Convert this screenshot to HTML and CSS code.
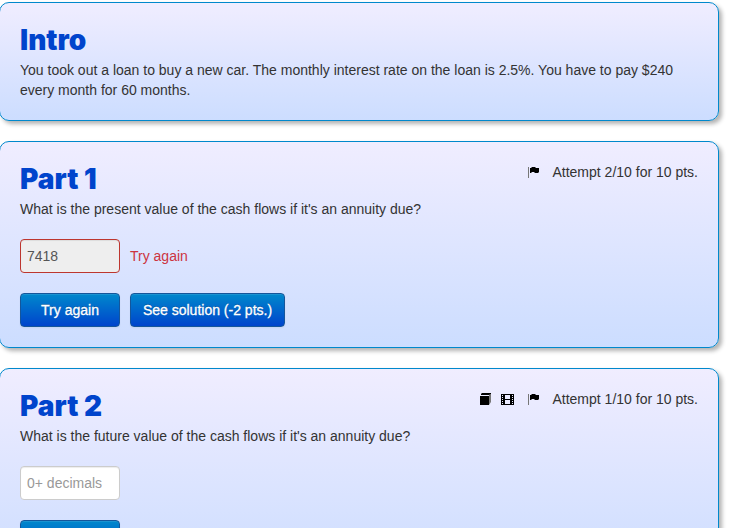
FILE: index.html
```
<!DOCTYPE html>
<html lang="en">

<head>
    <meta charset="UTF-8">
    <meta name="viewport" content="width=device-width, initial-scale=1.0">
    <title>Annuity problem</title>
    <link rel="stylesheet" href="styles.css">
</head>

<body>
    <div class="box">
        <h2>Intro</h2>
        <p><span class="line line-one">You took out a loan to buy a new car. The monthly interest rate on the loan is 2.5%. You have to pay $240</span> <span class="line line-two">every month for 60 months.</span></p>
    </div>

    <div class="box">
        <div class="box-head">
            <h2>Part 1</h2>
            <div class="status">
                <svg class="icon" width="14" height="14" viewBox="0 0 14 14">
                    <path fill="#777" d="M1 2h1v11H1z" />
                    <path d="M3 3h1l1-1h3l1 1h3v4l-1 1H8L7 7H5L4 8H3z" />
                </svg>
                <span class="attempt">Attempt 2/10 for 10 pts.</span>
            </div>
        </div>
        <p class="question-one">What is the present value of the cash flows if it's an annuity due?</p>
        <div class="answer">
            <input class="wrong" type="text" value="7418" readonly>
            <span class="feedback">Try again</span>
        </div>
        <div class="buttons">
            <button type="button" class="submit">Try again</button>
            <button type="button" class="solution">See solution (-2 pts.)</button>
        </div>
    </div>

    <div class="box">
        <div class="box-head">
            <h2>Part 2</h2>
            <div class="status">
                <svg class="icon book" width="14" height="14" viewBox="0 0 14 14">
                    <path fill="#777" d="M10 3l2-1v8l-2 3z" />
                    <path d="M1 4h9v9H1z M2 2l1-1h9v1l-2 1H2z" />
                </svg>
                <svg class="icon film" width="14" height="14" viewBox="0 0 14 14">
                    <path fill-rule="evenodd" d="M0 2h13v11H0z M4 3v4h5V3z M4 8v4h5V8z M1 3v1h1V3z M1 5v1h1V5z M1 7v1h1V7z M1 9v1h1V9z M1 11v1h1v-1z M11 3v1h1V3z M11 5v1h1V5z M11 7v1h1V7z M11 9v1h1V9z M11 11v1h1v-1z" />
                </svg>
                <svg class="icon" width="14" height="14" viewBox="0 0 14 14">
                    <path fill="#777" d="M1 2h1v11H1z" />
                    <path d="M3 3h1l1-1h3l1 1h3v4l-1 1H8L7 7H5L4 8H3z" />
                </svg>
                <span class="attempt">Attempt 1/10 for 10 pts.</span>
            </div>
        </div>
        <p class="question-two">What is the future value of the cash flows if it's an annuity due?</p>
        <div class="answer">
            <input type="text" placeholder="0+ decimals">
        </div>
        <div class="buttons">
            <button type="button" class="submit">Submit</button>
        </div>
    </div>
</body>

</html>
```

FILE: styles.css
```
* {
    box-sizing: border-box;
}

html {
    height: 100%;
    overflow: hidden;
}

body {
    height: 100%;
    overflow: hidden;
    margin: 0;
    padding-top: 2px;
    background-color: #ffffff;
    color: #333333;
    font-family: "Helvetica Neue", "Liberation Sans", Arial, sans-serif;
    font-size: 14px;
    line-height: 20px;
}

.box {
    width: 720px;
    margin: 0 0 20px -1px;
    padding: 17px 20px 20px;
    border: 1px solid #0088cc;
    border-radius: 10px;
    background-image: linear-gradient(#f0edff, #ccddff);
    box-shadow: 3px 3px 4px rgba(0, 0, 0, 0.3);
}

.box-head {
    display: flex;
    justify-content: space-between;
}

h2 {
    margin: 0;
    color: #0044cc;
    font-family: Inter, sans-serif;
    font-size: 28px;
    font-weight: 900;
    line-height: 40px;
}

p {
    margin: 0;
    white-space: nowrap;
}

.line {
    display: block;
}

.status {
    display: flex;
    height: 20px;
    margin-top: 3px;
}

.icon {
    margin: 3px 11px 0 0;
    fill: #000000;
}

.book {
    margin-right: 8px;
}

.film {
    margin-right: 12px;
}

.answer,
.buttons {
    display: flex;
    gap: 10px;
    margin-top: 20px;
}

input {
    width: 100px;
    height: 34px;
    padding: 4px 6px;
    border: 1px solid #cccccc;
    border-radius: 4px;
    background-color: #ffffff;
    box-shadow: inset 0 1px 1px rgba(0, 0, 0, 0.075);
    color: #555555;
    font: inherit;
}

input::placeholder {
    color: #999999;
}

.wrong {
    border-color: #bd362f;
    background-color: #eeeeee;
}

.feedback {
    color: #cc3340;
    line-height: 34px;
}

button {
    height: 34px;
    padding: 0;
    border: 1px solid #15569b;
    border-radius: 4px;
    background-image: linear-gradient(#0088cc, #0044cc);
    box-shadow: inset 0 1px 0 rgba(255, 255, 255, 0.1), 0 1px 2px rgba(0, 0, 0, 0.05);
    color: #ffffff;
    font: inherit;
    text-shadow: 0 -1px 0 rgba(0, 0, 0, 0.25);
    -webkit-text-stroke: 0.3px #ffffff;
    cursor: pointer;
}

.submit {
    width: 100px;
}

.solution {
    width: 155px;
}
```
